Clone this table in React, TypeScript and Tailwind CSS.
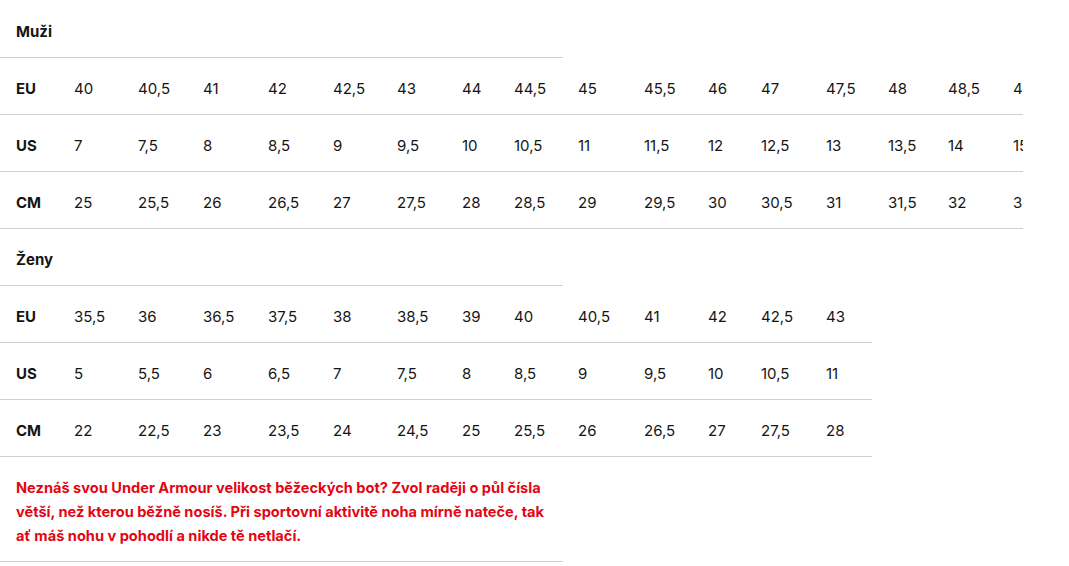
import React from "react";

const W: Record<number, string> = {
  58: "w-[58px]",
  64: "w-[64px]",
  65: "w-[65px]",
  52: "w-[52px]",
  66: "w-[66px]",
  53: "w-[53px]",
  62: "w-[62px]",
  60: "w-[60px]",
};

const widths = [58, 64, 65, 65, 65, 64, 65, 52, 64, 66, 64, 53, 65, 62, 60, 65, 65];

const men = {
  EU: ["40", "40,5", "41", "42", "42,5", "43", "44", "44,5", "45", "45,5", "46", "47", "47,5", "48", "48,5", "49"],
  US: ["7", "7,5", "8", "8,5", "9", "9,5", "10", "10,5", "11", "11,5", "12", "12,5", "13", "13,5", "14", "15"],
  CM: ["25", "25,5", "26", "26,5", "27", "27,5", "28", "28,5", "29", "29,5", "30", "30,5", "31", "31,5", "32", "33"],
};

const women = {
  EU: ["35,5", "36", "36,5", "37,5", "38", "38,5", "39", "40", "40,5", "41", "42", "42,5", "43"],
  US: ["5", "5,5", "6", "6,5", "7", "7,5", "8", "8,5", "9", "9,5", "10", "10,5", "11"],
  CM: ["22", "22,5", "23", "23,5", "24", "24,5", "25", "25,5", "26", "26,5", "27", "27,5", "28"],
};

function Row({ label, values }: { label: string; values: string[] }) {
  return (
    <div className="flex w-max h-[57px] items-center border-b border-[#d0d0d0]">
      <div className={`${W[widths[0]]} shrink-0 pl-4 pt-[7px] font-bold`}>{label}</div>
      {values.map((v, i) => (
        <div key={i} className={`${W[widths[i + 1]]} shrink-0 pl-4 pt-[7px]`}>
          {v}
        </div>
      ))}
    </div>
  );
}

function Header({ title }: { title: string }) {
  return (
    <div className="flex w-[563px] h-[57px] items-center border-b border-[#d0d0d0] pl-4 pt-[7px] font-bold">
      {title}
    </div>
  );
}

export default function App() {
  return (
    <div className="w-[1069px] h-[566px] bg-white overflow-hidden pt-px">
      <div
        className="w-[1023px] overflow-hidden text-[15px] text-[#151515]"
        style={{ fontFamily: "Inter, 'Noto Sans', sans-serif" }}
      >
        <Header title="Muži" />
        <Row label="EU" values={men.EU} />
        <Row label="US" values={men.US} />
        <Row label="CM" values={men.CM} />
        <Header title="Ženy" />
        <Row label="EU" values={women.EU} />
        <Row label="US" values={women.US} />
        <Row label="CM" values={women.CM} />
        <div className="w-[563px] border-b border-[#d0d0d0] px-4 pt-[19px] pb-[13px] text-[14.6px] leading-6 font-bold text-[#e30613] whitespace-nowrap">
          Neznáš svou Under Armour velikost běžeckých bot? Zvol raději o půl čísla
          <br />
          větší, než kterou běžně nosíš. Při sportovní aktivitě noha mírně nateče, tak
          <br />
          ať máš nohu v pohodlí a nikde tě netlačí.
        </div>
      </div>
    </div>
  );
}
